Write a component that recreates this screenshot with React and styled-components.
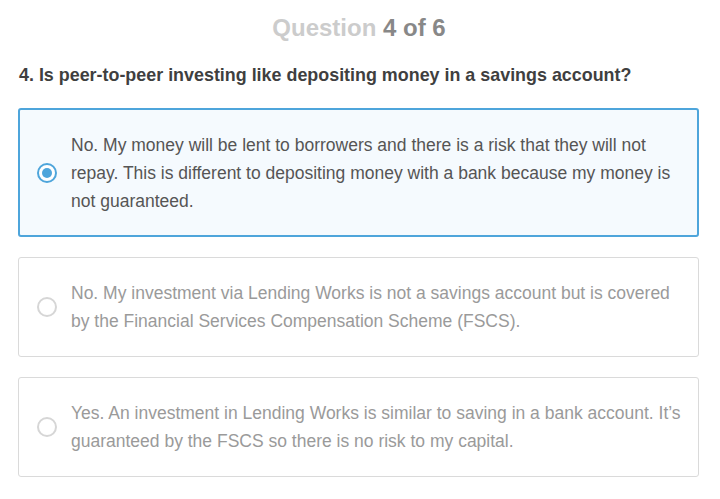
import React, { useState } from "react";
import styled, { createGlobalStyle } from "styled-components";

const Global = createGlobalStyle`
  html, body { margin: 0; padding: 0; background: #fff; }
  body { font-family: "Liberation Sans", Arial, sans-serif; }
`;

const Page = styled.div`
  width: 720px;
  padding: 14px 21px 0 18px;
  box-sizing: border-box;
`;

const Title = styled.h1`
  margin: 0;
  text-align: center;
  font-size: 24px;
  line-height: 28px;
  font-weight: bold;
  color: #cccccc;
  padding-left: 1px;
`;

const Count = styled.span`
  color: #888888;
`;

const QuestionText = styled.h2`
  margin: 23px 0 0 1px;
  font-size: 17.9px;
  line-height: 20px;
  font-weight: bold;
  color: #3f3f3f;
`;

const Options = styled.div`
  margin-top: 23px;
  display: flex;
  flex-direction: column;
  gap: 20px;
`;

const Option = styled.label`
  display: flex;
  align-items: center;
  gap: 14px;
  box-sizing: border-box;
  border-radius: 3px;
  border: ${(p) => (p.$selected ? "2px solid #4ea5db" : "1px solid #dadada")};
  background: ${(p) => (p.$selected ? "#f5fafe" : "#ffffff")};
  padding: ${(p) => (p.$selected ? "21px 13px 20px 17px" : "21px 14px 21px 18px")};
  cursor: pointer;
`;

const Radio = styled.span`
  flex: 0 0 auto;
  width: 20px;
  height: 20px;
  box-sizing: border-box;
  border-radius: 50%;
  border: 2px solid ${(p) => (p.$selected ? "#4ea5db" : "#d6d6d6")};
  background: #fff;
  display: flex;
  align-items: center;
  justify-content: center;
  &::after {
    content: "";
    display: ${(p) => (p.$selected ? "block" : "none")};
    width: 10px;
    height: 10px;
    border-radius: 50%;
    background: #4ea5db;
  }
`;

const OptionText = styled.span`
  font-size: 17.5px;
  line-height: 28px;
  color: ${(p) => (p.$selected ? "#555555" : "#9a9a9a")};
`;

const options = [
  "No. My money will be lent to borrowers and there is a risk that they will not repay. This is different to depositing money with a bank because my money is not guaranteed.",
  "No. My investment via Lending Works is not a savings account but is covered by the Financial Services Compensation Scheme (FSCS).",
  "Yes. An investment in Lending Works is similar to saving in a bank account. It\u2019s guaranteed by the FSCS so there is no risk to my capital.",
];

export default function App() {
  const [selected, setSelected] = useState(0);
  return (
    <Page>
      <Global />
      <Title>
        Question <Count>4 of 6</Count>
      </Title>
      <QuestionText>
        4. Is peer-to-peer investing like depositing money in a savings account?
      </QuestionText>
      <Options>
        {options.map((text, i) => (
          <Option key={i} $selected={selected === i} onClick={() => setSelected(i)}>
            <Radio $selected={selected === i} />
            <OptionText $selected={selected === i}>{text}</OptionText>
          </Option>
        ))}
      </Options>
    </Page>
  );
}
